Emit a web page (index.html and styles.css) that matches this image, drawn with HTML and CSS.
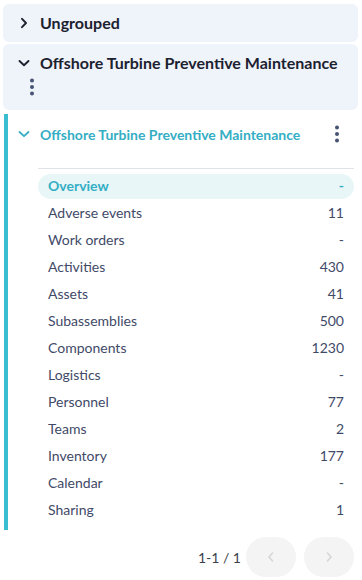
FILE: index.html
```html
<!DOCTYPE html>
<html>
<head>
<meta charset="utf-8">
<link rel="stylesheet" href="styles.css">
</head>
<body>
<div class="card card-collapsed">
  <div class="card-head">
    <span class="chev"><svg width="12" height="12" viewBox="0 0 12 12"><path d="M4 1.8 L8 6 L4 10.2" fill="none" stroke="#1c2130" stroke-width="1.9" stroke-linecap="round" stroke-linejoin="round"/></svg></span>
    <span class="card-title">Ungrouped</span>
  </div>
</div>
<div class="card card-open">
  <div class="card-head wrap">
    <span class="chev"><svg width="12" height="12" viewBox="0 0 12 12"><path d="M1.5 4 L6 8.2 L10.5 4" fill="none" stroke="#1c2130" stroke-width="1.9" stroke-linecap="round" stroke-linejoin="round"/></svg></span>
    <span class="card-title">Offshore Turbine Preventive Maintenance</span>
    <span class="kebab kebab-wrapped"><svg width="6" height="18" viewBox="0 0 6 18"><circle cx="3" cy="2.5" r="2" fill="#465373"/><circle cx="3" cy="9" r="2" fill="#465373"/><circle cx="3" cy="15.5" r="2" fill="#465373"/></svg></span>
  </div>
</div>
<div class="section">
  <div class="section-head">
    <span class="chev"><svg width="12" height="12" viewBox="0 0 12 12"><path d="M1.5 4 L6 8.2 L10.5 4" fill="none" stroke="#34aec4" stroke-width="1.8" stroke-linecap="round" stroke-linejoin="round"/></svg></span>
    <span class="section-title">Offshore Turbine Preventive Maintenance</span>
    <span class="kebab"><svg width="6" height="18" viewBox="0 0 6 18"><circle cx="3" cy="2.5" r="2" fill="#465373"/><circle cx="3" cy="9" r="2" fill="#465373"/><circle cx="3" cy="15.5" r="2" fill="#465373"/></svg></span>
  </div>
  <div class="divider"></div>
  <ul class="nav">
    <li class="nav-row active"><span>Overview</span><span>-</span></li>
    <li class="nav-row"><span>Adverse events</span><span>11</span></li>
    <li class="nav-row"><span>Work orders</span><span>-</span></li>
    <li class="nav-row"><span>Activities</span><span>430</span></li>
    <li class="nav-row"><span>Assets</span><span>41</span></li>
    <li class="nav-row"><span>Subassemblies</span><span>500</span></li>
    <li class="nav-row"><span>Components</span><span>1230</span></li>
    <li class="nav-row"><span>Logistics</span><span>-</span></li>
    <li class="nav-row"><span>Personnel</span><span>77</span></li>
    <li class="nav-row"><span>Teams</span><span>2</span></li>
    <li class="nav-row"><span>Inventory</span><span>177</span></li>
    <li class="nav-row"><span>Calendar</span><span>-</span></li>
    <li class="nav-row"><span>Sharing</span><span>1</span></li>
  </ul>
</div>
<div class="pager">
  <span class="pager-text">1-1 / 1</span>
  <button class="pager-btn"><svg width="10" height="12" viewBox="0 0 10 12"><path d="M6.5 2 L3 6 L6.5 10" fill="none" stroke="#d6d6d6" stroke-width="1.6" stroke-linecap="round" stroke-linejoin="round"/></svg></button>
  <button class="pager-btn"><svg width="10" height="12" viewBox="0 0 10 12"><path d="M3.5 2 L7 6 L3.5 10" fill="none" stroke="#d6d6d6" stroke-width="1.6" stroke-linecap="round" stroke-linejoin="round"/></svg></button>
</div>
</body>
</html>
```

FILE: styles.css
```css
* { box-sizing: border-box; }
html, body { margin: 0; background: #fff; }
body {
  padding: 4px 4px 0 3px;
  font-family: Lato, "Noto Sans", sans-serif;
  color: #1c2130;
}
.card {
  background: #eff3fa;
  border-radius: 6px;
  margin-bottom: 2px;
}
.card-collapsed { padding: 7px 0; }
.card-open { padding: 7px 0 11px; margin-bottom: 4px; }
.card-head {
  display: flex;
  align-items: center;
  padding-left: 13px;
}
.card-head.wrap { flex-wrap: wrap; }
.chev {
  width: 16px;
  height: 24px;
  margin-right: 8px;
  display: flex;
  align-items: center;
  justify-content: center;
  flex: none;
}
.card-title {
  font-size: 16px;
  font-weight: 700;
  line-height: 24px;
  white-space: nowrap;
  color: #1c2130;
}
.kebab {
  width: 24px;
  height: 24px;
  display: flex;
  align-items: center;
  justify-content: center;
  flex: none;
}
.kebab-wrapped { margin-left: 4px; }
.section {
  margin-left: 1px;
  border-left: 4px solid #3bbdd1;
  padding: 0 4px 7px 0;
}
.section-head {
  display: flex;
  align-items: center;
  height: 40px;
  padding-left: 8px;
}
.section-title {
  flex: 1;
  font-size: 14px;
  font-weight: 700;
  color: #34aec4;
  white-space: nowrap;
}
.section-head .kebab { margin-right: 5px; }
.divider {
  margin: 14px 0 5px 30px;
  height: 1px;
  background: #e0e2e6;
}
.nav {
  list-style: none;
  margin: 0 0 0 30px;
  padding: 0;
  display: flex;
  flex-direction: column;
  gap: 2px;
}
.nav-row {
  display: flex;
  justify-content: space-between;
  align-items: center;
  height: 25px;
  padding: 0 10px 2px;
  font-size: 14px;
  line-height: 23px;
  color: #3f4a68;
  border-radius: 13px;
}
.nav-row.active {
  background: #e8f6f8;
  color: #34aec4;
  font-weight: 700;
}
.pager {
  display: flex;
  justify-content: flex-end;
  align-items: center;
  gap: 8px;
  margin-top: 7px;
  padding-right: 4px;
}
.pager-text {
  font-size: 14px;
  color: #3a3f4c;
  margin-right: -3px;
}
.pager-btn {
  width: 50px;
  height: 40px;
  border: none;
  border-radius: 20px;
  background: #f4f4f5;
  display: flex;
  align-items: center;
  justify-content: center;
  padding: 0;
}
```
